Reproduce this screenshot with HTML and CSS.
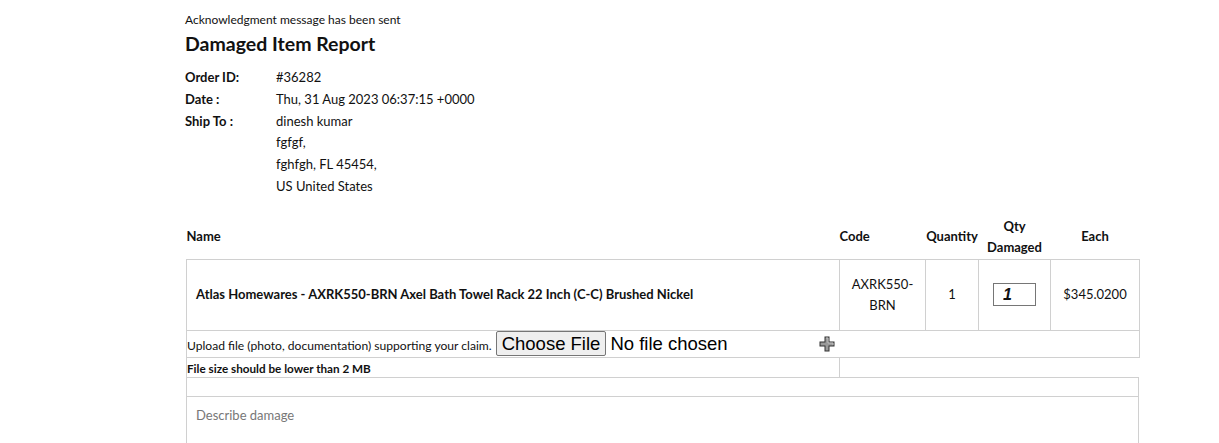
FILE: index.html
```html
<!DOCTYPE html>
<html lang="en">
<head>
  <meta charset="UTF-8" />
  <title>Damaged Item Report</title>
  <link rel="stylesheet" href="styles.css">
</head>
<body>

<div class="report">
  <div class="ack">Acknowledgment message has been sent</div>
  <h1>Damaged Item Report</h1>

  <div class="order-info">
    <div class="label">Order ID:</div>
    <div>#36282</div>
    <div class="label">Date :</div>
    <div>Thu, 31 Aug 2023 06:37:15 +0000</div>
    <div class="label">Ship To :</div>
    <div>
      dinesh kumar<br>
      fgfgf,<br>
      fghfgh, FL 45454,<br>
      US United States
    </div>
  </div>

  <form class="claim-form">
    <table class="items">
      <colgroup>
        <col class="col-name">
        <col class="col-code">
        <col class="col-qty">
        <col class="col-damaged">
        <col class="col-each">
      </colgroup>
      <thead>
        <tr>
          <th class="left">Name</th>
          <th class="left">Code</th>
          <th>Quantity</th>
          <th>Qty<br>Damaged</th>
          <th>Each</th>
        </tr>
      </thead>
      <tbody>
        <tr class="item-row">
          <td class="item-name">Atlas Homewares - AXRK550-BRN Axel Bath Towel Rack 22 Inch (C-C) Brushed Nickel</td>
          <td class="center">AXRK550-<br>BRN</td>
          <td class="center">1</td>
          <td class="center"><input type="text" class="qty-input" value="1"></td>
          <td class="center">$345.0200</td>
        </tr>
        <tr class="upload-row">
          <td colspan="5">
            <div class="upload-cell">
              <span class="upload-label">Upload file (photo, documentation) supporting your claim.</span>
              <input type="file" class="file-input">
              <!-- mouse cursor captured in the screenshot -->
              <svg class="cursor" width="16" height="16" viewBox="0 0 16 16">
                <path d="M5.5 0.5h5v5h5v5h-5v5h-5v-5h-5v-5h5z" fill="#333"/>
                <path d="M6.5 1.5h3v5h5v3h-5v5h-3v-5h-5v-3h5z" fill="#9a9a9a"/>
                <path d="M7 2h2v5h5v2" fill="none" stroke="#c8c8c8" stroke-width="0.8"/>
              </svg>
            </div>
          </td>
        </tr>
        <tr class="note-row">
          <td class="note">File size should be lower than 2 MB</td>
          <td colspan="4" class="blank"></td>
        </tr>
      </tbody>
    </table>

    <div class="spacer-box"></div>
    <textarea class="damage-text" placeholder="Describe damage"></textarea>
  </form>
</div>

</body>
</html>
```
FILE: styles.css
```css
:root {
  --border-color: #d0d0d0;
  --text-color: #111;
}

* {
  box-sizing: border-box;
}
body {
  margin: 0;
  font-family: Lato, "Noto Sans", sans-serif;
  font-size: 13px;
  color: var(--text-color);
  background: #fff;
}

.report {
  padding: 12px 0 0 185px;
  width: 1140px;
}

.ack {
  font-size: 12px;
  line-height: 16px;
}

h1 {
  font-size: 19.5px;
  font-weight: 700;
  line-height: 26px;
  margin: 3px 0 0 0;
}

/* Order details */
.order-info {
  display: grid;
  grid-template-columns: 91px auto;
  line-height: 21.8px;
  margin-top: 10px;
}
.order-info .label {
  font-weight: 700;
}

/* Items table */
.items {
  border-collapse: collapse;
  table-layout: fixed;
  width: 953px;
  margin: 18px 0 0 1px;
}
.col-name { width: 653px; }
.col-code { width: 86px; }
.col-qty { width: 53px; }
.col-damaged { width: 72px; }
.col-each { width: 89px; }

.items th {
  font-weight: 700;
  line-height: 21px;
  padding: 0 0 1px 0;
  text-align: center;
  vertical-align: middle;
}
.items th.left {
  text-align: left;
}

.item-row td {
  border: 1px solid var(--border-color);
  line-height: 21px;
  padding: 14px 0;
  height: 71px;
  vertical-align: middle;
}
.item-row .item-name {
  font-weight: 700;
  padding-left: 9px;
}
.center {
  text-align: center;
}

.qty-input {
  width: 43px;
  height: 23px;
  border: 1px solid #767676;
  border-radius: 0;
  padding: 0 0 0 9px;
  font: italic 900 16px "Liberation Sans", sans-serif;
  color: #111;
  display: block;
  margin: 0 auto;
}

.upload-row td {
  border: 1px solid var(--border-color);
  padding: 0;
  height: 27px;
}
.upload-cell {
  position: relative;
  display: flex;
  align-items: center;
  gap: 4px;
}
.upload-label {
  font-size: 12.1px;
  margin-top: 3px;
}
.file-input {
  font: 18.5px "Liberation Sans", Arial, sans-serif;
  color: #000;
}
.file-input::file-selector-button {
  font: inherit;
  background: #efefef;
  border: 1px solid #767676;
  border-radius: 2px;
  padding: 0 5px;
  margin-right: 4px;
  height: 25px;
}
.cursor {
  position: absolute;
  left: 632px;
  top: 5px;
}

.note-row td {
  height: 20px;
  padding: 0;
}
.note {
  font-size: 11.7px;
  font-weight: 700;
  border-left: 1px solid var(--border-color);
  border-right: 1px solid var(--border-color);
}

.spacer-box {
  width: 953px;
  height: 20px;
  margin-left: 1px;
  border: 1px solid var(--border-color);
}

.damage-text {
  display: block;
  width: 953px;
  height: 90px;
  margin-left: 1px;
  margin-top: -1px;
  border: 1px solid var(--border-color);
  padding: 10px 9px;
  font-family: Lato, "Noto Sans", sans-serif;
  font-size: 13px;
  resize: none;
}
.damage-text::placeholder {
  color: #777;
}
```
